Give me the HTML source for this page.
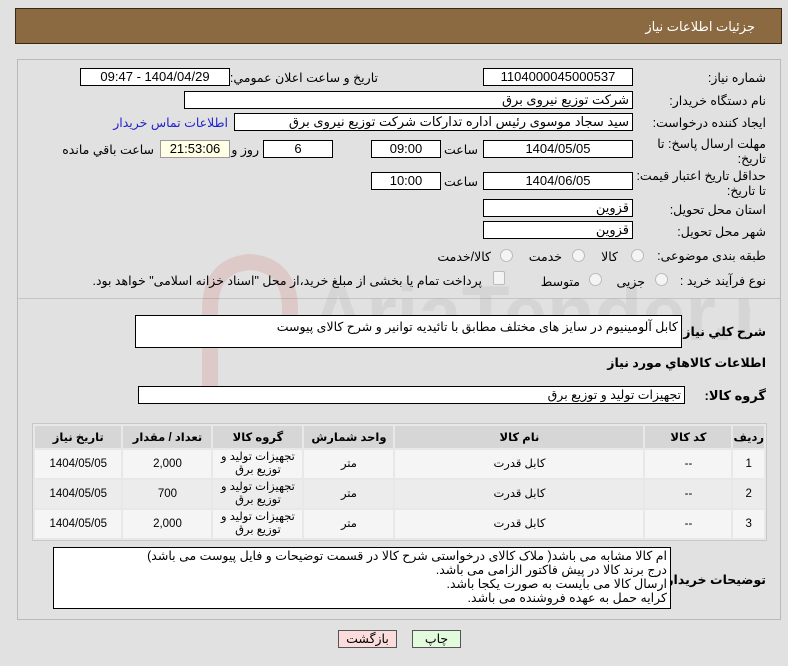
<!DOCTYPE html>
<html><head><meta charset="utf-8"><style>
body{margin:0;width:788px;height:666px;background:#e1e1e1;font-family:"Liberation Sans","DejaVu Sans",sans-serif;font-size:12px;color:#000;position:relative;overflow:hidden}
.a{position:absolute}
.hdr{left:15px;top:8px;width:767px;height:36px;background:#8b6a42;border:1px solid #3a2a14;box-sizing:border-box}
.hdr span{position:absolute;right:26px;top:10px;color:#fff;font-size:13px}
.pnl{left:17px;top:59px;width:764px;height:561px;border:1px solid #b9b9b9;box-sizing:border-box;background:#e1e1e1}
.in{position:absolute;background:#fff;border:1px solid #000;box-sizing:border-box;height:18px;line-height:16px;text-align:center;font-size:13px;direction:rtl;white-space:nowrap;overflow:hidden}
.l{position:absolute;direction:rtl;white-space:nowrap;font-size:12.5px}
.r{text-align:right;padding-right:3px}
.rad{position:absolute;width:11px;height:11px;border:1px solid #bbb;border-radius:50%;background:#f4f4f4}
table{position:absolute;left:32px;top:423px;width:735px;border-collapse:separate;border-spacing:2px;direction:rtl;border:1px solid #c8c8c8;background:#e8e8e8}
td,th{font-size:11.5px;text-align:center;padding:0}
th{background:#d6d6d6;height:22px;font-weight:bold}
td{background:#f5f5f5;height:28px;line-height:13px}
tr.e td{background:#ececec}
.btn{position:absolute;top:630px;height:18px;border:1px solid #555;box-sizing:border-box;font-size:12.5px;text-align:center;line-height:16px}
</style></head><body>
<div class="a hdr"><span>جزئیات اطلاعات نیاز</span></div>
<div class="a pnl"></div>
<div class="a" style="left:18px;top:298px;width:762px;border-top:1px solid #c4c4c4"></div>
<svg class="a" style="left:190px;top:250px" width="560" height="140" opacity="0.1"><path d="M20 140 V60 Q20 15 60 12 Q100 15 100 60 V90" fill="none" stroke="#c00" stroke-width="16"/><text x="120" y="90" font-family="Liberation Sans" font-size="78" font-weight="bold" fill="#777">AriaTender.net</text></svg>

<div class="l" style="right:22px;top:70px">شماره نیاز:</div>
<div class="in" style="left:483px;top:68px;width:150px">1104000045000537</div>
<div class="l" style="right:410px;top:70px">تاریخ و ساعت اعلان عمومي:</div>
<div class="in" style="left:80px;top:68px;width:150px">1404/04/29 - 09:47</div>

<div class="l" style="right:22px;top:93px">نام دستگاه خریدار:</div>
<div class="in r" style="left:184px;top:91px;width:449px">شرکت توزیع نیروی برق</div>

<div class="l" style="right:22px;top:115px">ایجاد کننده درخواست:</div>
<div class="in r" style="left:234px;top:113px;width:399px">سید سجاد موسوی رئیس اداره تدارکات شرکت توزیع نیروی برق</div>
<div class="l" style="right:560px;top:115px;color:#2222cc">اطلاعات تماس خریدار</div>

<div class="l" style="right:22px;top:136px">مهلت ارسال پاسخ: تا</div>
<div class="l" style="right:22px;top:151px">تاریخ:</div>
<div class="in" style="left:483px;top:140px;width:150px">1404/05/05</div>
<div class="l" style="right:310px;top:142px">ساعت</div>
<div class="in" style="left:371px;top:140px;width:70px">09:00</div>
<div class="in" style="left:263px;top:140px;width:70px">6</div>
<div class="l" style="right:529px;top:142px">روز و</div>
<div class="in" style="left:160px;top:140px;width:70px;background:#ffffe6;border-color:#999">21:53:06</div>
<div class="l" style="right:634px;top:142px">ساعت باقي مانده</div>

<div class="l" style="right:22px;top:168px">حداقل تاریخ اعتبار قیمت:</div>
<div class="l" style="right:22px;top:183px">تا تاریخ:</div>
<div class="in" style="left:483px;top:172px;width:150px">1404/06/05</div>
<div class="l" style="right:310px;top:174px">ساعت</div>
<div class="in" style="left:371px;top:172px;width:70px">10:00</div>

<div class="l" style="right:22px;top:202px">استان محل تحویل:</div>
<div class="in r" style="left:483px;top:199px;width:150px">قزوین</div>
<div class="l" style="right:22px;top:224px">شهر محل تحویل:</div>
<div class="in r" style="left:483px;top:221px;width:150px">قزوین</div>

<div class="l" style="right:22px;top:248px">طبقه بندی موضوعی:</div>
<div class="rad" style="left:631px;top:249px"></div><div class="l" style="right:170px;top:249px">کالا</div>
<div class="rad" style="left:572px;top:249px"></div><div class="l" style="right:226px;top:249px">خدمت</div>
<div class="rad" style="left:500px;top:249px"></div><div class="l" style="right:297px;top:249px">کالا/خدمت</div>

<div class="l" style="right:22px;top:273px">نوع فرآیند خرید :</div>
<div class="rad" style="left:655px;top:273px"></div><div class="l" style="right:143px;top:274px">جزیی</div>
<div class="rad" style="left:589px;top:273px"></div><div class="l" style="right:208px;top:274px">متوسط</div>
<div class="a" style="left:493px;top:271px;width:10px;height:12px;border:1px solid #bbb;background:#f4f4f4;border-radius:2px"></div>
<div class="l" style="right:306px;top:273px">پرداخت تمام یا بخشی از مبلغ خرید،از محل "اسناد خزانه اسلامی" خواهد بود.</div>

<div class="l" style="right:22px;top:324px;font-weight:bold">شرح کلي نیاز:</div>
<div class="in r" style="left:135px;top:315px;width:547px;height:33px;text-align:right;line-height:22px;font-size:12.5px">کابل آلومینیوم در سایز های مختلف مطابق با تائیدیه توانیر و شرح کالای پیوست</div>
<div class="l" style="right:22px;top:355px;font-weight:bold">اطلاعات کالاهاي مورد نیاز</div>
<div class="l" style="right:22px;top:388px;font-weight:bold;font-size:13px">گروه کالا:</div>
<div class="in r" style="left:138px;top:386px;width:547px;font-size:12.5px">تجهیزات تولید و توزیع برق</div>

<table>
<tr><th style="width:27px">ردیف</th><th style="width:86px">کد کالا</th><th style="width:248px">نام کالا</th><th style="width:89px">واحد شمارش</th><th style="width:89px">گروه کالا</th><th style="width:88px">تعداد / مقدار</th><th>تاریخ نیاز</th></tr>
<tr><td>1</td><td>--</td><td>کابل قدرت</td><td>متر</td><td>تجهیزات تولید و<br>توزیع برق</td><td>2,000</td><td>1404/05/05</td></tr>
<tr class="e"><td>2</td><td>--</td><td>کابل قدرت</td><td>متر</td><td>تجهیزات تولید و<br>توزیع برق</td><td>700</td><td>1404/05/05</td></tr>
<tr><td>3</td><td>--</td><td>کابل قدرت</td><td>متر</td><td>تجهیزات تولید و<br>توزیع برق</td><td>2,000</td><td>1404/05/05</td></tr>
</table>

<div class="l" style="right:22px;top:572px;font-weight:bold">توضیحات خریدار:</div>
<div class="in" style="left:53px;top:547px;width:618px;height:62px;text-align:right;line-height:14px;font-size:12.5px;white-space:normal;padding:1px 3px 0 0">ام کالا مشابه می باشد( ملاک کالای درخواستی شرح کالا در قسمت توضیحات و فایل پیوست می باشد)<br>درج برند کالا در پیش فاکتور الزامی می باشد.<br>ارسال کالا می بایست به صورت یکجا باشد.<br>کرایه حمل به عهده فروشنده می باشد.</div>

<div class="btn" style="left:338px;width:59px;background:#fbdcdc">بازگشت</div>
<div class="btn" style="left:412px;width:49px;background:#e2fbdc">چاپ</div>
</body></html>
